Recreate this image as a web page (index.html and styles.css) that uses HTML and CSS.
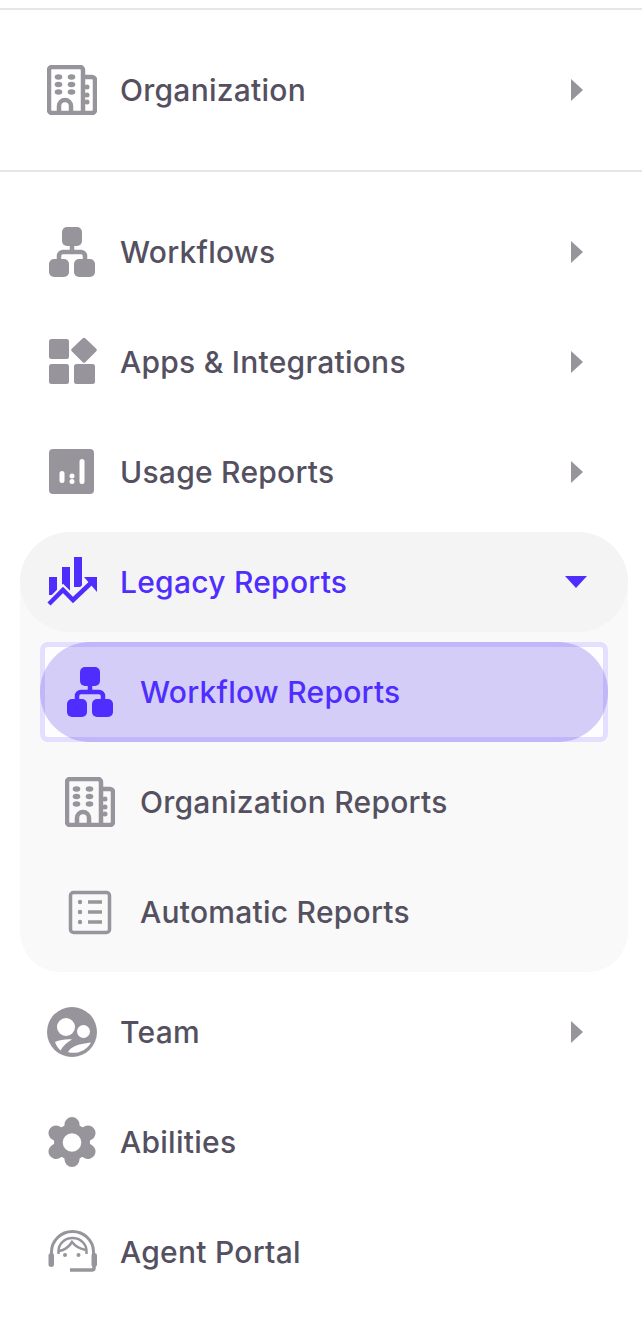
FILE: index.html
```html
<!DOCTYPE html>
<html lang="en">
<head>
  <meta charset="UTF-8" />
  <meta name="viewport" content="width=device-width, initial-scale=1" />
  <title>Navigation</title>
  <link rel="stylesheet" href="styles.css">
</head>
<body>
  <svg class="sprite" aria-hidden="true">
    <symbol id="icon-building" viewBox="0 0 50 50">
      <path d="M36 48H5a3 3 0 0 1-3-3V5a3 3 0 0 1 3-3h28a3 3 0 0 1 3 3v45M36 12h9a3 3 0 0 1 3 3v30a3 3 0 0 1-3 3h-9" fill="none" stroke="currentColor" stroke-width="4.500"/>
      <ellipse cx="11.500" cy="12" rx="3.800" ry="2.700"/><ellipse cx="24.500" cy="12" rx="3.800" ry="2.700"/>
      <ellipse cx="11.500" cy="19.500" rx="3.800" ry="2.700"/><ellipse cx="24.500" cy="19.500" rx="3.800" ry="2.700"/>
      <ellipse cx="11.500" cy="27" rx="3.800" ry="2.700"/><ellipse cx="24.500" cy="27" rx="3.800" ry="2.700"/>
      <circle cx="40" cy="22" r="2.500"/><circle cx="40" cy="30" r="2.500"/><circle cx="40" cy="37" r="2.500"/>
      <path d="M12 48v-7a6 6 0 0 1 12 0v7" fill="none" stroke="currentColor" stroke-width="4.500"/>
    </symbol>
    <symbol id="icon-workflow" viewBox="0 0 50 50">
      <rect x="15" y="0" width="20" height="19" rx="5"/>
      <rect x="2" y="32" width="20" height="18" rx="5"/>
      <rect x="27" y="32" width="21" height="18" rx="5"/>
      <path d="M25 18v7M12 34v-5a4 4 0 0 1 4-4h18a4 4 0 0 1 4 4v5" fill="none" stroke="currentColor" stroke-width="4.500"/>
    </symbol>
  </svg>

  <nav class="side-nav">
    <hr class="divider">
    <a class="nav-row">
      <svg class="nav-icon"><use href="#icon-building"/></svg>
      <span class="nav-label">Organization</span>
      <span class="arrow-right"></span>
    </a>
    <hr class="divider">

    <div class="nav-list">
      <a class="nav-row">
        <svg class="nav-icon"><use href="#icon-workflow"/></svg>
        <span class="nav-label">Workflows</span>
        <span class="arrow-right"></span>
      </a>
      <a class="nav-row">
        <svg class="nav-icon" viewBox="0 0 50 50">
          <rect x="2" y="2" width="20" height="20" rx="2.500"/>
          <rect x="2" y="27" width="20" height="20" rx="2.500"/>
          <rect x="27" y="27" width="21" height="20" rx="2.500"/>
          <path d="M35.500 1.500a2 2 0 0 1 3 0L49 11.500a2 2 0 0 1 0 3L38.500 25a2 2 0 0 1-3 0L25 14.500a2 2 0 0 1 0-3z"/>
        </svg>
        <span class="nav-label">Apps &amp; Integrations</span>
        <span class="arrow-right"></span>
      </a>
      <a class="nav-row">
        <svg class="nav-icon" viewBox="0 0 50 50">
          <path fill-rule="evenodd" d="M6 2h37a4 4 0 0 1 4 4v37a4 4 0 0 1-4 4H6a4 4 0 0 1-4-4V6a4 4 0 0 1 4-4zM15 24a2.500 2.500 0 0 0-2.500 2.500v7a2.500 2.500 0 0 0 5 0v-7A2.500 2.500 0 0 0 15 24zM25 26.500a2.500 2.500 0 1 0 0 5 2.500 2.500 0 0 0 0-5zM25 32a2.500 2.500 0 1 0 0 5 2.500 2.500 0 0 0 0-5zM35 12a2.500 2.500 0 0 0-2.500 2.500v20a2.500 2.500 0 0 0 5 0v-20A2.500 2.500 0 0 0 35 12z"/>
        </svg>
        <span class="nav-label">Usage Reports</span>
        <span class="arrow-right"></span>
      </a>

      <div class="nav-group">
        <a class="nav-row nav-row-open">
          <svg class="nav-icon" viewBox="0 0 50 50">
            <path d="M2 20h8v18H2zM15 10h8v24h-8zM27 0h8v30h-8z"/>
            <path d="M2 47l14-14 10 10 19-18" fill="none" stroke="#f4f4f4" stroke-width="9"/>
            <path d="M2 47l14-14 10 10 19-18" fill="none" stroke="currentColor" stroke-width="4.500"/>
            <path d="M37 20h13v15z"/>
          </svg>
          <span class="nav-label">Legacy Reports</span>
          <span class="arrow-down"></span>
        </a>
        <a class="sub-row sub-row-active">
          <svg class="nav-icon"><use href="#icon-workflow"/></svg>
          <span class="nav-label">Workflow Reports</span>
        </a>
        <a class="sub-row">
          <svg class="nav-icon"><use href="#icon-building"/></svg>
          <span class="nav-label">Organization Reports</span>
        </a>
        <a class="sub-row">
          <svg class="nav-icon" viewBox="0 0 50 50">
            <rect x="5.500" y="5.500" width="39" height="40" rx="3" fill="none" stroke="currentColor" stroke-width="3.500"/>
            <circle cx="15" cy="15" r="2.200"/><circle cx="15" cy="25" r="2.200"/><circle cx="15" cy="35" r="2.200"/>
            <path d="M23 15h14M23 25h14M23 35h14" stroke="currentColor" stroke-width="3.500"/>
          </svg>
          <span class="nav-label">Automatic Reports</span>
        </a>
      </div>

      <a class="nav-row">
        <svg class="nav-icon" viewBox="0 0 50 50">
          <circle cx="25" cy="25" r="25"/>
          <circle cx="19" cy="20" r="9" fill="#fff"/>
          <circle cx="36.500" cy="24.500" r="6.500" fill="#fff"/>
          <path d="M8 35c5-2 11-3 17-2.500-5 2.500-9 6.500-11.500 11C11 41 9 38 8 35zM21 45c3-5 9-8 23-9.500-3 5.500-8 8.500-13 10-4 .5-7 .5-10-.5z" fill="#fff"/>
        </svg>
        <span class="nav-label">Team</span>
        <span class="arrow-right"></span>
      </a>
      <a class="nav-row">
        <svg class="nav-icon" viewBox="0 0 50 50">
          <path d="M25 7.500v35M9 16l32 18.500M9 34.500L41 16" stroke="currentColor" stroke-width="15" stroke-linecap="round"/>
          <circle cx="25" cy="25" r="18"/>
          <circle cx="25" cy="25.500" r="9.300" fill="#fff"/>
        </svg>
        <span class="nav-label">Abilities</span>
      </a>
      <a class="nav-row">
        <svg class="nav-icon" viewBox="0 0 50 50">
          <path d="M4.500 30v-5a21 20.500 0 0 1 42 0v5" fill="none" stroke="currentColor" stroke-width="3"/>
          <path d="M11.500 27v-3a14 13 0 0 1 28 0v3" fill="none" stroke="currentColor" stroke-width="2.500"/>
          <path d="M12 24c6-1 10-4 13-9 3 4 8 7 14 8" fill="none" stroke="currentColor" stroke-width="2.500"/>
          <rect x="1.500" y="26" width="5.500" height="14" rx="2.700"/>
          <rect x="44.500" y="26" width="5.500" height="14" rx="2.700"/>
          <circle cx="18" cy="28" r="2"/><circle cx="31.500" cy="28" r="2"/>
          <path d="M47 38v3a2 2 0 0 1-2 2H23" fill="none" stroke="currentColor" stroke-width="3.500"/>
        </svg>
        <span class="nav-label">Agent Portal</span>
      </a>
    </div>
  </nav>
</body>
</html>
```

FILE: styles.css
```css
* {
  box-sizing: border-box;
}
body {
  margin: 0;
  background: #fff;
  font-family: 'Inter', sans-serif;
  color: #54505f;
}
.sprite {
  display: none;
}
.side-nav {
  padding-top: 8px;
}
.divider {
  height: 2px;
  margin: 0;
  border: none;
  background: #e6e6e6;
}
.nav-row {
  display: flex;
  align-items: center;
  height: 100px;
  margin: 30px 0;
  padding: 0 59px 0 47px;
}
.nav-list {
  display: flex;
  flex-direction: column;
  gap: 10px;
  margin-top: 30px;
}
.nav-list .nav-row {
  margin: 0;
}
.nav-group {
  display: flex;
  flex-direction: column;
  gap: 10px;
  margin: 0 14px 0 20px;
  padding-bottom: 10px;
  background: #f9f9f9;
  border-radius: 50px 50px 40px 40px;
}
.nav-list .nav-row-open {
  padding: 0 41px 0 27px;
  background: #f4f4f4;
  border-radius: 50px;
  color: #4f2dff;
}
.nav-row-open .nav-icon {
  fill: #4f2dff;
  color: #4f2dff;
}
.sub-row {
  position: relative;
  display: flex;
  align-items: center;
  height: 100px;
  margin: 0 20px;
  padding-left: 25px;
}
.sub-row .nav-icon {
  margin-right: 25px;
}
.sub-row-active {
  background: #fdfdff;
  border-radius: 8px;
  color: #4f2dff;
}
.sub-row-active::before {
  content: "";
  position: absolute;
  inset: 0;
  background: rgba(60, 30, 215, 0.21);
  border-radius: 50px;
}
.sub-row-active::after {
  content: "";
  position: absolute;
  inset: 0;
  border: 5px solid rgba(79, 45, 255, 0.14);
  border-radius: 8px;
}
.sub-row-active .nav-icon {
  position: relative;
  z-index: 1;
  fill: #4f2dff;
  color: #4f2dff;
}
.sub-row-active .nav-label {
  position: relative;
  z-index: 1;
}
.nav-icon {
  flex: none;
  width: 50px;
  height: 50px;
  margin-right: 23px;
  fill: #97959b;
  color: #97959b;
}
.nav-label {
  flex: 1;
  font-size: 30px;
  font-weight: 500;
  letter-spacing: 0.25px;
  white-space: nowrap;
}
.arrow-right {
  flex: none;
  width: 0;
  height: 0;
  border-top: 11px solid transparent;
  border-bottom: 11px solid transparent;
  border-left: 12px solid #97959b;
}
.arrow-down {
  flex: none;
  width: 0;
  height: 0;
  border-left: 11px solid transparent;
  border-right: 11px solid transparent;
  border-top: 12px solid #4f2dff;
}
```
